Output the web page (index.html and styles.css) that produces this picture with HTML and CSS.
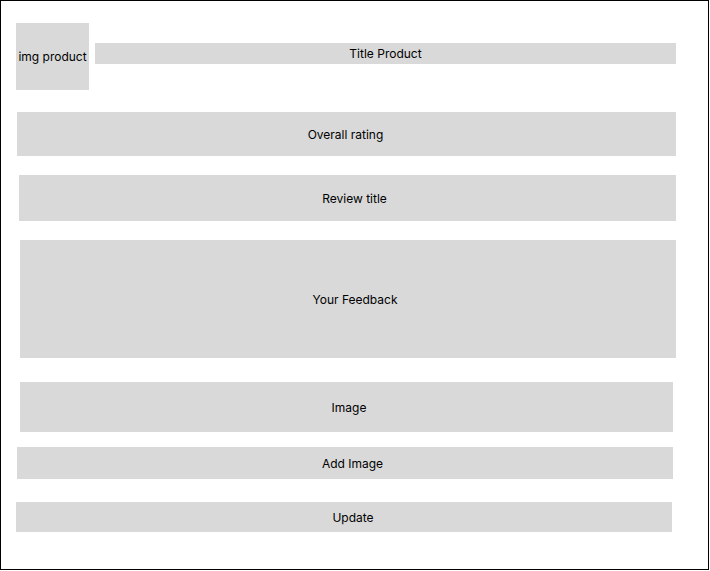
FILE: index.html
```html
<!DOCTYPE html>
<html>
<head>
<meta charset="utf-8">
<link rel="stylesheet" href="styles.css">
</head>
<body>
<div class="frame">
  <div class="header">
    <div class="box img-product">img product</div>
    <div class="box title-product">Title Product</div>
  </div>
  <div class="box overall">Overall rating</div>
  <div class="box review-title">Review title</div>
  <div class="box feedback">Your Feedback</div>
  <div class="box image">Image</div>
  <div class="box add-image">Add Image</div>
  <div class="box update">Update</div>
</div>
</body>
</html>
```
FILE: styles.css
```css
html, body {
  margin: 0;
  padding: 0;
  background: #fff;
}
.frame {
  box-sizing: border-box;
  width: 709px;
  height: 570px;
  border: 1px solid #000;
  font-family: Inter, "Noto Sans", sans-serif;
  font-size: 12px;
  color: #000;
}
.box {
  background: #d9d9d9;
  display: flex;
  align-items: center;
  justify-content: center;
  box-sizing: border-box;
  white-space: nowrap;
}
.header {
  display: flex;
  align-items: flex-start;
  padding-top: 22px;
}
.img-product {
  margin-left: 15px;
  width: 73px;
  height: 67px;
}
.title-product {
  margin-left: 6px;
  margin-top: 20px;
  width: 581px;
  height: 21px;
}
.overall {
  margin: 22px 0 0 16px;
  width: 659px;
  height: 44px;
  padding-right: 2px;
}
.review-title {
  margin: 19px 0 0 18px;
  width: 657px;
  height: 46px;
  padding-left: 14px;
}
.feedback {
  margin: 19px 0 0 19px;
  width: 656px;
  height: 118px;
  padding-left: 14px;
}
.image {
  margin: 24px 0 0 19px;
  width: 653px;
  height: 50px;
  padding-left: 5px;
}
.add-image {
  margin: 15px 0 0 16px;
  width: 656px;
  height: 32px;
  padding-left: 15px;
}
.update {
  margin: 23px 0 0 15px;
  width: 656px;
  height: 30px;
  padding-left: 18px;
}
```
